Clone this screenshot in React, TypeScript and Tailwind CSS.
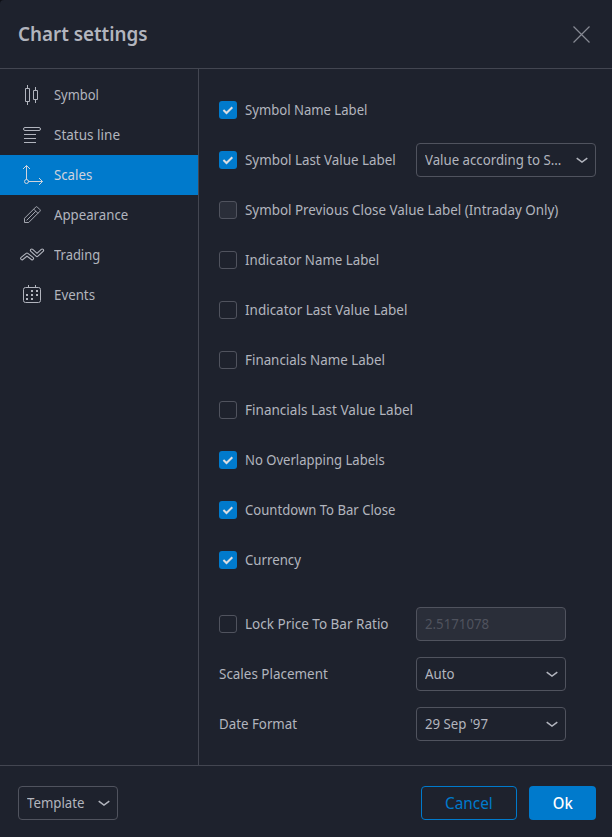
import type { ReactNode } from "react";

function Chevron() {
  return (
    <svg className="shrink-0" width="12" height="8" viewBox="0 0 12 8" fill="none" stroke="#b2b5be" strokeWidth="1.5">
      <path d="M.7 2.2 6 6.1l5.3-3.9" />
    </svg>
  );
}

function Icon({ children }: { children: ReactNode }) {
  return (
    <svg className="shrink-0" width="28" height="28" viewBox="0 0 28 28" fill="none" stroke="currentColor">
      {children}
    </svg>
  );
}

// Horizontally condensed text; `fit` is the scale utility for the label.
function Text({ fit, children }: { fit: string; children: ReactNode }) {
  return <span className={`inline-block origin-left whitespace-nowrap ${fit}`}>{children}</span>;
}

const tabs: { label: string; fit: string; icon: ReactNode }[] = [
  {
    label: "Symbol",
    fit: "scale-x-[0.925]",
    icon: (
      <Icon>
        <path d="M7.5 7.5h4v13h-4zM9.5 4v3.5M9.5 20.5V24M15.5 9.5h4v9h-4zM17.5 6v3.5M17.5 18.5V22" />
      </Icon>
    ),
  },
  {
    label: "Status line",
    fit: "scale-x-[0.965]",
    icon: (
      <Icon>
        <rect x="5.5" y="6.5" width="17" height="3" rx="1.5" />
        <path d="M6 13.5h12M6 17.5h12M6 21.5h12" />
      </Icon>
    ),
  },
  {
    label: "Scales",
    fit: "scale-x-[0.945]",
    icon: (
      <Icon>
        <circle cx="8.5" cy="20.5" r="2" />
        <path d="M8.5 18.5v-14M5 8l3.5-3.5L12 8M10.5 20.5h14M21 17l3.5 3.5L21 24" />
      </Icon>
    ),
  },
  {
    label: "Appearance",
    fit: "scale-x-[0.945]",
    icon: (
      <Icon>
        <path
          strokeWidth="0.9"
          strokeLinejoin="round"
          d="M6.5 21.5v-4.2L17.7 6.1a1.2 1.2 0 0 1 1.7 0l2.5 2.5a1.2 1.2 0 0 1 0 1.7L10.7 21.5zM15.7 8.1l4.2 4.2M8.6 19.4l9.2-9.2"
        />
      </Icon>
    ),
  },
  {
    label: "Trading",
    fit: "scale-x-[0.925]",
    icon: (
      <Icon>
        <g strokeLinecap="round" strokeLinejoin="round">
          <path strokeWidth="3.8" d="m4 17.4 5-4 5.2 4" />
          <path stroke="#1e222d" strokeWidth="1.6" d="m4 17.4 5-4 5.2 4" />
          <path strokeWidth="3.8" d="m13.8 9.4 5.2 4.8 5.2-4.8" />
          <path stroke="#1e222d" strokeWidth="1.6" d="m13.8 9.4 5.2 4.8 5.2-4.8" />
        </g>
      </Icon>
    ),
  },
  {
    label: "Events",
    fit: "scale-x-[0.95]",
    icon: (
      <Icon>
        <rect x="5.5" y="6.5" width="17" height="15" rx="2" />
        <path d="M10.5 4v2.5M17.5 4v2.5" />
        <path
          fill="currentColor"
          stroke="none"
          d="M13 9h2v2h-2zM18 9h2v2h-2zM8 13h2v2H8zM13 13h2v2h-2zM18 13h2v2h-2zM8 17h2v2H8zM13 17h2v2h-2z"
        />
      </Icon>
    ),
  },
];

function Checkbox({ checked, disabled }: { checked?: boolean; disabled?: boolean }) {
  if (checked) {
    return (
      <span className="flex size-[18px] shrink-0 items-center justify-center rounded-[3px] bg-[#007acc]">
        <svg width="12" height="10" viewBox="0 0 12 10" fill="none" stroke="#dbdde2" strokeWidth="2">
          <path d="m1.4 5 3.1 3 5.8-5.8" />
        </svg>
      </span>
    );
  }
  return (
    <span
      className={`size-[18px] shrink-0 rounded-[3px] border border-[#50535e] ${disabled ? "bg-[#2a2e39]" : ""}`}
    />
  );
}

function Select({ value, width }: { value: string; width: string }) {
  return (
    <div className={`flex h-[34px] items-center justify-between rounded border border-[#50535e] pr-[7px] pl-2 ${width}`}>
      <Text fit="scale-x-[0.945]">{value}</Text>
      <Chevron />
    </div>
  );
}

const rows: { label: string; fit: string; checked?: boolean; disabled?: boolean; select?: string }[] = [
  { label: "Symbol Name Label", fit: "scale-x-[0.937]", checked: true },
  { label: "Symbol Last Value Label", fit: "scale-x-[0.955]", checked: true, select: "Value according to S..." },
  { label: "Symbol Previous Close Value Label (Intraday Only)", fit: "scale-x-[0.956]", disabled: true },
  { label: "Indicator Name Label", fit: "scale-x-[0.948]" },
  { label: "Indicator Last Value Label", fit: "scale-x-[0.962]" },
  { label: "Financials Name Label", fit: "scale-x-[0.954]" },
  { label: "Financials Last Value Label", fit: "scale-x-[0.967]" },
  { label: "No Overlapping Labels", fit: "scale-x-[0.933]", checked: true },
  { label: "Countdown To Bar Close", fit: "scale-x-[0.937]", checked: true },
  { label: "Currency", fit: "scale-x-[0.945]", checked: true },
];

export default function App() {
  return (
    <div className="bg-[#0d0f15]">
      <div className="flex h-[837px] w-[612px] flex-col overflow-hidden rounded-tl-[4px] bg-[#1e222d] font-['Noto_Sans',sans-serif] text-[14px] leading-5 text-[#b2b5be]">
        <header className="flex h-[69px] items-center justify-between border-b border-[#434651] pr-[22px] pl-[18px]">
          <h1 className="text-[20px] leading-7 font-semibold">
            <Text fit="scale-x-[0.94]">Chart settings</Text>
          </h1>
          <svg width="17" height="17" viewBox="0 0 17 17" stroke="#868993" strokeWidth="1.2">
            <path d="m.5.5 16 16M16.5.5l-16 16" />
          </svg>
        </header>
        <div className="flex h-[696px]">
          <nav className="w-[199px] border-r border-[#434651] pt-1.5">
            {tabs.map((t) => (
              <div
                key={t.label}
                className={`flex h-10 items-center gap-2 pl-[18px] ${t.label === "Scales" ? "bg-[#007acc] text-[#d1d4dc]" : ""}`}
              >
                {t.icon}
                <Text fit={t.fit}>{t.label}</Text>
              </div>
            ))}
          </nav>
          <main className="w-[413px] pt-4 pr-4 pl-5">
            {rows.map((r) => (
              <div key={r.label} className="flex h-[50px] items-center">
                <label className="flex w-[197px] shrink-0 items-center gap-2">
                  <Checkbox checked={r.checked} disabled={r.disabled} />
                  <Text fit={r.fit}>{r.label}</Text>
                </label>
                {r.select && <Select value={r.select} width="w-[180px]" />}
              </div>
            ))}
            <div className="mt-3.5 flex h-[50px] items-center">
              <label className="flex w-[197px] items-center gap-2">
                <Checkbox />
                <Text fit="scale-x-[0.965]">Lock Price To Bar Ratio</Text>
              </label>
              <div className="flex h-[34px] w-[150px] items-center rounded border border-[#50535e] bg-[#2a2e39] pl-2 text-[#50535e]">
                <Text fit="scale-x-[0.945]">2.5171078</Text>
              </div>
            </div>
            <div className="flex h-[50px] items-center">
              <div className="w-[197px]">
                <Text fit="scale-x-[0.96]">Scales Placement</Text>
              </div>
              <Select value="Auto" width="w-[150px]" />
            </div>
            <div className="flex h-[50px] items-center">
              <div className="w-[197px]">
                <Text fit="scale-x-[0.95]">Date Format</Text>
              </div>
              <Select value="29 Sep '97" width="w-[150px]" />
            </div>
          </main>
        </div>
        <footer className="flex h-[72px] items-center justify-between border-t border-[#434651] pt-[3px] pr-4 pl-[18px]">
          <Select value="Template" width="w-[100px]" />
          <div className="flex gap-3 text-[16px]">
            <button className="h-[34px] w-24 rounded border border-[#007acc] text-[#007acc]">
              <span className="inline-block scale-x-[0.96]">Cancel</span>
            </button>
            <button className="h-[34px] w-[67px] rounded bg-[#007acc] font-medium text-white">
              <span className="inline-block scale-x-[0.93]">Ok</span>
            </button>
          </div>
        </footer>
      </div>
    </div>
  );
}
